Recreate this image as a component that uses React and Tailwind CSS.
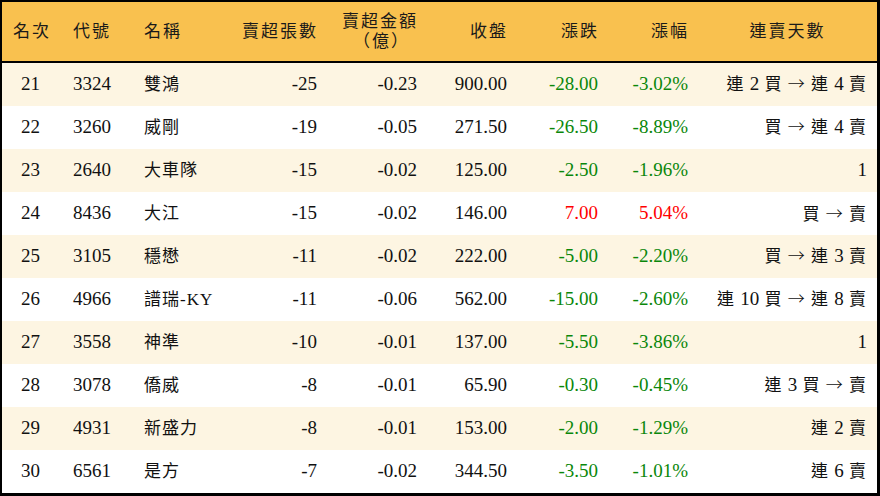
const rows = [
  { rank: 21, code: '3324', name: '雙鴻', qty: '-25', amt: '-0.23', close: '900.00', chg: '-28.00', pct: '-3.02%', days: '連 2 買 → 連 4 賣' },
  { rank: 22, code: '3260', name: '威剛', qty: '-19', amt: '-0.05', close: '271.50', chg: '-26.50', pct: '-8.89%', days: '買 → 連 4 賣' },
  { rank: 23, code: '2640', name: '大車隊', qty: '-15', amt: '-0.02', close: '125.00', chg: '-2.50', pct: '-1.96%', days: '1' },
  { rank: 24, code: '8436', name: '大江', qty: '-15', amt: '-0.02', close: '146.00', chg: '7.00', pct: '5.04%', days: '買 → 賣' },
  { rank: 25, code: '3105', name: '穩懋', qty: '-11', amt: '-0.02', close: '222.00', chg: '-5.00', pct: '-2.20%', days: '買 → 連 3 賣' },
  { rank: 26, code: '4966', name: '譜瑞-KY', qty: '-11', amt: '-0.06', close: '562.00', chg: '-15.00', pct: '-2.60%', days: '連 10 買 → 連 8 賣' },
  { rank: 27, code: '3558', name: '神準', qty: '-10', amt: '-0.01', close: '137.00', chg: '-5.50', pct: '-3.86%', days: '1' },
  { rank: 28, code: '3078', name: '僑威', qty: '-8', amt: '-0.01', close: '65.90', chg: '-0.30', pct: '-0.45%', days: '連 3 買 → 賣' },
  { rank: 29, code: '4931', name: '新盛力', qty: '-8', amt: '-0.01', close: '153.00', chg: '-2.00', pct: '-1.29%', days: '連 2 賣' },
  { rank: 30, code: '6561', name: '是方', qty: '-7', amt: '-0.02', close: '344.50', chg: '-3.50', pct: '-1.01%', days: '連 6 賣' },
];

const font = "font-['Liberation_Serif','Noto_Sans_CJK_TC',serif]";

// digits a size up, arrow from the CJK font (Liberation's is tiny)
function Days({ text }) {
  const parts = text.split(/(\d+|→)/).filter(Boolean);
  return (
    <>
      {parts.map((p, i) => {
        if (p === '→') return <span key={i} className="font-['Noto_Sans_CJK_TC',sans-serif] font-light">→</span>;
        if (/^\d+$/.test(p)) return <span key={i} className="text-[19px] tracking-normal">{p}</span>;
        return <span key={i}>{p}</span>;
      })}
    </>
  );
}

export default function App() {
  return (
    <div className={`w-[880px] h-[496px] border-t-2 border-l-2 border-r-[3px] border-b-[3px] border-black bg-white text-[#111] ${font}`}>
      {/* header */}
      <div className="flex h-[61px] bg-[#f9c14f] border-b-2 border-black text-[17px] tracking-[2px] text-[#1a1a1a]">
        <div className="w-[60px] flex items-center justify-center">名次</div>
        <div className="w-[72px] flex items-center pl-[11px]">代號</div>
        <div className="w-[106px] flex items-center pl-[10px]">名稱</div>
        <div className="w-[87px] flex items-center justify-end pr-[9px]">賣超張數</div>
        <div className="w-[100px] flex flex-col items-end justify-center pr-[9px] leading-[20px]">
          <span>賣超金額</span>
          <span className="pr-[8px]">（億）</span>
        </div>
        <div className="w-[90px] flex items-center justify-end pr-[9px]">收盤</div>
        <div className="w-[91px] flex items-center justify-end pr-[9px]">漲跌</div>
        <div className="w-[90px] flex items-center justify-end pr-[9px]">漲幅</div>
        <div className="flex-1 flex items-center justify-center">連賣天數</div>
      </div>

      {rows.map((r, i) => {
        const up = !r.chg.startsWith('-');
        const tone = up ? 'text-[#ff0000]' : 'text-[#0a870a]';
        return (
          <div key={r.rank} className={`flex h-[43px] items-center text-[19px] ${i % 2 === 0 ? 'bg-[#fdf5e2]' : 'bg-white'}`}>
            <div className="w-[60px] text-center pr-[3px]">{r.rank}</div>
            <div className="w-[72px] pl-[11px]">{r.code}</div>
            <div className="w-[106px] pl-[10px] tracking-[1px] text-[17px]">{r.name}</div>
            <div className="w-[87px] text-right pr-[10px]">{r.qty}</div>
            <div className="w-[100px] text-right pr-[10px]">{r.amt}</div>
            <div className="w-[90px] text-right pr-[10px]">{r.close}</div>
            <div className={`w-[91px] text-right pr-[10px] ${tone}`}>{r.chg}</div>
            <div className={`w-[90px] text-right pr-[10px] ${tone}`}>{r.pct}</div>
            <div className="flex-1 text-right pr-[10px] text-[17px] tracking-[1px] whitespace-pre">
              <Days text={r.days} />
            </div>
          </div>
        );
      })}
    </div>
  );
}
